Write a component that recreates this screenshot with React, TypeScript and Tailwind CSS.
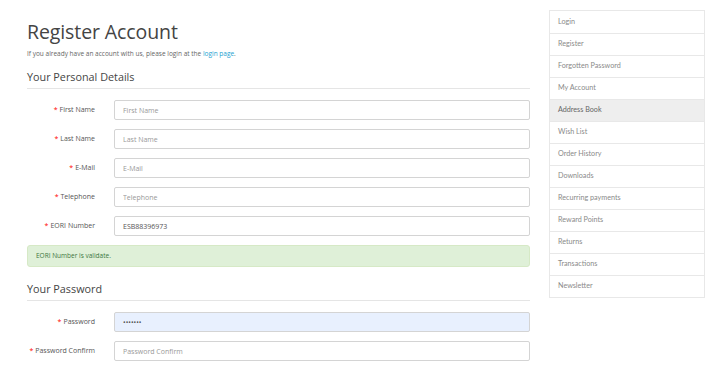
import React from "react"

const PERSONAL = [
  { label: "First Name", placeholder: "First Name", value: "" },
  { label: "Last Name", placeholder: "Last Name", value: "" },
  { label: "E-Mail", placeholder: "E-Mail", value: "" },
  { label: "Telephone", placeholder: "Telephone", value: "" },
  { label: "EORI Number", placeholder: "EORI Number", value: "ESB88396973" },
]

const LINKS = [
  "Login",
  "Register",
  "Forgotten Password",
  "My Account",
  "Address Book",
  "Wish List",
  "Order History",
  "Downloads",
  "Recurring payments",
  "Reward Points",
  "Returns",
  "Transactions",
  "Newsletter",
]

function Field({
  label,
  placeholder,
  value,
  autofill = false,
}: {
  label: string
  placeholder: string
  value?: string
  autofill?: boolean
}) {
  return (
    <div className="flex items-center h-[20px] mb-[9px]">
      <label className="w-[68px] shrink-0 text-right text-[7px] text-[#555]">
        <span className="text-[#f00] mr-[2px]">*</span>
        {label}
      </label>
      <div className="w-[19px] shrink-0" />
      <input
        type="text"
        readOnly
        placeholder={placeholder}
        defaultValue={value}
        className={
          "w-[416px] h-[20px] rounded-[2px] border border-[#d4d4d4] px-[8px] text-[7px] text-[#555] placeholder:text-[#999] outline-none " +
          (autofill ? "bg-[#e8f0fe]" : "bg-white")
        }
      />
    </div>
  )
}

export default function App() {
  return (
    <div className="w-[710px] h-[380px] overflow-hidden bg-white flex font-['Open_Sans',sans-serif]">
      {/* Main content */}
      <div className="w-[503px] ml-[27px] shrink-0">
        <h1 className="mt-[20px] text-[19.5px] leading-[24px] font-normal tracking-[-0.1px] text-[#444]">
          Register Account
        </h1>
        <p className="mt-[5px] text-[6.5px] leading-[10px] text-[#666]">
          If you already have an account with us, please login at the{" "}
          <a className="text-[#23a1d1]">login page</a>.
        </p>

        <h2 className="mt-[10px] text-[10.8px] leading-[16px] font-normal text-[#444]">Your Personal Details</h2>
        <div className="mt-[3px] border-t border-[#e5e5e5] mb-[11px]" />

        {PERSONAL.map((f) => (
          <Field key={f.label} label={f.label} placeholder={f.placeholder} value={f.value} />
        ))}

        <div className="mt-[2px] h-[22px] rounded-[3px] border border-[#d6e9c6] bg-[#dff0d8] px-[8px] flex items-center text-[6.5px] text-[#3c763d]">
          EORI Number is validate.
        </div>

        <h2 className="mt-[14px] text-[10.8px] leading-[16px] font-normal text-[#444]">Your Password</h2>
        <div className="mt-[3px] border-t border-[#e5e5e5] mb-[11px]" />

        <Field label="Password" placeholder="Password" value="•••••••" autofill />
        <Field label="Password Confirm" placeholder="Password Confirm" />
      </div>

      {/* Sidebar */}
      <aside className="ml-[19px] mt-[10px] w-[156px] shrink-0 self-start border border-[#e8e8e8] font-['Lato',sans-serif]">
        {LINKS.map((l, i) => (
          <div
            key={l}
            className={
              "h-[22px] flex items-center px-[8px] text-[7.2px] text-[#8a8a8a] " +
              (i > 0 ? "border-t border-[#e8e8e8] " : "") +
              (l === "Address Book" ? "bg-[#eeeeee] text-[#666]" : "")
            }
          >
            {l}
          </div>
        ))}
      </aside>
    </div>
  )
}
